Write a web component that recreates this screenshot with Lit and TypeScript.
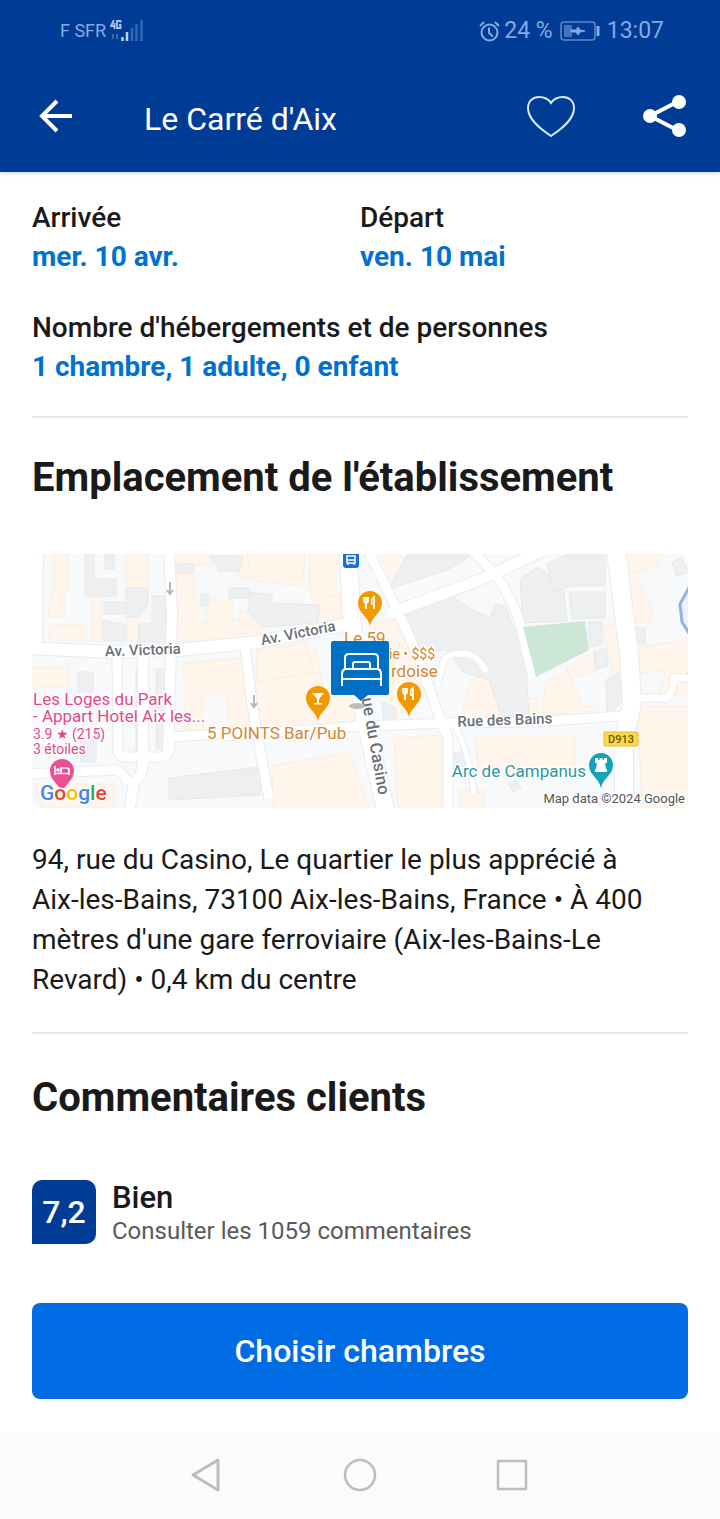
import { LitElement, html, svg, css } from "lit";
import { customElement } from "lit/decorators.js";

type Glyph = "fork" | "glass" | "bed" | "tower";

const POINTS: { x: number; y: number; color: string; glyph: Glyph }[] = [
  { x: 338, y: 49, color: "#f29900", glyph: "fork" },
  { x: 286, y: 144, color: "#f29900", glyph: "glass" },
  { x: 377, y: 140, color: "#f29900", glyph: "fork" },
  { x: 30, y: 217, color: "#ec4f93", glyph: "bed" },
  { x: 569, y: 211, color: "#12a4b6", glyph: "tower" },
];

const GLYPHS = {
  fork: svg`<path d="M-6-6v4a2 2 0 0 0 4 0v-4M-4-6V6M4 6V-6c-2 1-3 4-2 7h2" fill="none" stroke="#fff" stroke-width="1.800"/>`,
  glass: svg`<path d="M-6-5H6L1 1v4h3v1.500H-4V5h3V1z" fill="#fff"/>`,
  bed: svg`<path d="M-7-5v9M-7 2.500H7V4M7 2V-1q0-2-2-2H-1v5" fill="none" stroke="#fff" stroke-width="1.700"/><circle cx="-4" cy="-1" r="1.800" fill="#fff"/>`,
  tower: svg`<path d="M-6-7h3v2h1.500v-2h3v2H3v-2h3v5H4l1 6h1v3H-6V4h1l1-6h-2z" fill="#fff"/>`,
};

/* Building footprints, grouped by the zone tint they take. */
const BEIGE = [
  "M22 0h14v38H22zM20 38h12v25H16zM17 71h37v15H17z", "M60 43h9v44h-9zM94 0h22v35H94zM95 63h11v24H95z",
  "M145 19h17v30h4v20h8V46h26V66h28v18L143 88z", "M146 0h34v11h-34zM202 0h26v24h-22z",
  "M0 113h37v20H0z", "M152 109l58-5 8 72h-22v-34h-25v34h-19z", "M2 230h80v24H10z",
  "M215 0h58l-3 32-50-5zM278 0h26v48l-22 5-5-20zM208 57l24 4v18h-24z", "M284 46l24-6 1 24-27 5z",
  "M224 106l60-12 8 44 36 6 6 26-110 5z", "M224 98l50-10 8 30-56 10z",
  "M240 212l78-14 18 56h-95z", "M348 0l12 28 26-10-20-18zM342 70l28-8 27 74-36 30-8-60z",
  "M362 184l48-3v73h-44z", "M438 130l12-14 14 12 4 16h36l4 18-80 4z", "M443 182h100v36l-96 6z",
  "M514 127l22-10 14 35h18l-10 8h-48zM534 114l22-14 10 16-26 8zM570 70h16l12 46-18 4z", "M590 0h43l-8 12-34 10zM591 24h14l15 28-1 16h-21z",
  "M600 94l56-8v55l-30 0 8-24-26 2zM606 152h50v102h-46z", "M428 236h24v18h-24z",
];
const GREY = [
  "M53 0h9v25h22v17H53zM73 0h9v15h-9z", "M94 34h22v17l-10 12H94z", "M120 42h14v46h-27V70h13zM72 48h22v12h-22zM71 66l23 5v16H71z",
  "M144 10h18v9h-18zM178 2h33l-4 15h-20z", "M197 34h20v10h-20zM169 40h7v12h-7z", "M46 118h15v20H46zM49 186h15v22H49z",
  "M137 224l91-11 0 28-91 5z", "M218 38l22 3v8l48 2-2 18-56 4-14-15z", "M357 35l60-20 24-15-66 0zM371 59l47-18 20 13 20 10 5-14 10 2 20 50 4 60-28 0-12-36-26-8-16-22-34 2z",
  "M104 115h11v82h-11zM124 115h12v80h-12z", "M488 25l18-12 25 18 4 36-44 2z", "M515 10l20-10h38v32h-34l-18 6zM537 38h36v26l-33 1z",
  "M556 68h14v22l-12 3zM562 98l12-4 2 18-12 4zM574 126l16-8 3 26-18 20z", "M601 74h12v16h-12zM640 8l10-4 6 14-12 4z",
  "M412 200l24-3v15l-24 0zM208 218l20 0v22l-20 0zM350 148l14 6v14h-12z", "M476 230l8-4 5 8-8 4z",
];
const ROADS: { d: string; w: number }[] = [
  { d: "M4-4L3 94", w: 14 },
  { d: "M-4 94L80 98L146 96L226 88L316 70", w: 12 },
  { d: "M137-4L140 60L136 200", w: 10 },
  { d: "M85 100L86 196Q86 203 94 203H128Q138 203 138 190V183L190 180", w: 9 },
  { d: "M111 100V206Q111 222 102 228L97 258", w: 10 },
  { d: "M-4 220L84 216Q92 218 96 230", w: 9 },
  { d: "M190 182L330 172L420 169L500 168L592 162", w: 9 },
  { d: "M213 90L220 150L237 245", w: 9 },
  { d: "M316-4L322 100L334 170L354 258", w: 17 },
  { d: "M336-4L366 58L386 102L410 170L416 184V258", w: 9 },
  { d: "M356 60L448 26L512-4", w: 11 },
  { d: "M436-8L466 24Q484 52 489 74L501 124", w: 9 },
  { d: "M405 132L412 106Q416 98 436 100Q448 104 454 118", w: 6 },
  { d: "M420 168Q436 190 442 240", w: 5 },
  { d: "M584-4L597 100L600 150L592 185V258", w: 18 },
  { d: "M600 144H634Q640 142 642 124H656", w: 7 },
];

@customElement("place-map")
export class PlaceMap extends LitElement {
  static styles = css`
    :host { display: block; border-radius: 8px; overflow: hidden; }
    svg { display: block; width: 100%; height: auto; font-family: Roboto, "Liberation Sans", sans-serif; }
    .poi { font-size: 17px; }
    .small { font-size: 14px; }
    .street { font-size: 15px; font-weight: 500; fill: #6b7178; text-anchor: middle; }
    .casino { font-size: 17px; }
    .halo { stroke: #fff; stroke-width: 3px; paint-order: stroke; stroke-linejoin: round; }
    .food { fill: #d58632; }
    .hotel { fill: #df4a8b; }
    .sight { fill: #2e97a3; }
    .credit { font-size: 13px; fill: #555; text-anchor: end; }
    .shield { font-size: 11px; font-weight: 500; fill: #6b5510; text-anchor: middle; }
    .logo { font-size: 21px; font-weight: 500; }
  `;

  render() {
    return html`
      <svg viewBox="0 0 656 254" role="img" aria-label="Plan du quartier">
        <rect width="656" height="254" fill="#f7f9fb" />
        ${BEIGE.map((d) => svg`<path d=${d} fill="#fff5ea" stroke="#fbeee1" stroke-width="1"/>`)}
        ${GREY.map((d) => svg`<path d=${d} fill="#eeeff0" stroke="#e6e8ea" stroke-width="1"/>`)}
        <path d="M660 28L648 50L650 68L660 84" fill="#eaf2fb" stroke="#94b0e2" stroke-width="3" />
        <path d="M652 126l8-10" stroke="#63aebb" stroke-width="3" />
        ${ROADS.map((r) => svg`<path d=${r.d} fill="none" stroke="#e9ebee" stroke-width=${r.w + 2}/>`)}
        ${ROADS.map((r) => svg`<path d=${r.d} fill="none" stroke="#fff" stroke-width=${r.w}/>`)}
        <path d="M491 73L553 67L557 96L504 123Z" fill="#cde7d6" />
        <path d="M138 28v12m-3-4l3 4 3-4M222 141v12m-3-4l3 4 3-4" fill="none" stroke="#b4b8bc" stroke-width="2" />

        <text class="street halo" transform="translate(111 101) rotate(-2)">Av. Victoria</text>
        <text class="street halo" transform="translate(267 84) rotate(-11)">Av. Victoria</text>
        <text class="street halo" transform="translate(473 171) rotate(-2)">Rue des Bains</text>
        <text class="street casino halo" transform="translate(338 193) rotate(80)">ue du Casino</text>

        <text class="poi food halo" x="312" y="90">Le 59</text>
        <text class="small food halo" x="357" y="105">ie • $$$</text>
        <text class="poi food halo" x="359" y="123">rdoise</text>
        <text class="poi food halo" x="175" y="185">5 POINTS Bar/Pub</text>
        <text class="poi hotel halo" x="1" y="151">Les Loges du Park</text>
        <text class="poi hotel halo" x="1" y="168">- Appart Hotel Aix les...</text>
        <text class="small hotel halo" x="1" y="185">3.9 <tspan font-family="DejaVu Sans">★</tspan> (215)</text>
        <text class="small hotel halo" x="1" y="200">3 étoiles</text>
        <text class="poi sight halo" x="554" y="223" text-anchor="end">Arc de Campanus</text>

        <rect x="572" y="178" width="34" height="14" rx="1" fill="#f9d849" stroke="#e6c02f" />
        <text class="shield" x="589" y="189">D913</text>

        <rect x="311" y="-2" width="16" height="16" rx="3" fill="#1a6fd0" />
        <path d="M315 2h8v7h-8zM315 6h8M316 9v2M322 9v2" fill="none" stroke="#fff" stroke-width="1.500" />

        ${POINTS.map(
          (p) => svg`<g transform="translate(${p.x} ${p.y})">
            <path d="M0 23C-2 13-12 10-12 0a12 12 0 0 1 24 0C12 10 2 13 0 23z" fill=${p.color}/>
            ${GLYPHS[p.glyph]}
          </g>`
        )}

        <ellipse cx="325" cy="152" rx="8" ry="3" fill="#bcbcbc" />
        <path d="M301 87h54q2 0 2 2v50q0 2-2 2h-19l-7 6-7-6h-21q-2 0-2-2v-50q0-2 2-2z" fill="#0070c4" />
        <path d="M310 132v-12q0-4 3-5v-11q0-4 4-4h25q4 0 4 4v11q3 1 3 5v12M310 125h38M313 115h33M321 115v-5q0-2 2-2h13q2 0 2 2v5" fill="none" stroke="#fff" stroke-width="2" />

        <text class="logo halo" x="8" y="246"><tspan fill="#4285f4">G</tspan><tspan fill="#ea4335">o</tspan><tspan fill="#fbbc05">o</tspan><tspan fill="#4285f4">g</tspan><tspan fill="#34a853">l</tspan><tspan fill="#ea4335">e</tspan></text>
        <text class="credit halo" x="653" y="249">Map data ©2024 Google</text>
      </svg>
    `;
  }
}

@customElement("app-root")
export class AppRoot extends LitElement {
  static styles = css`
    :host {
      display: flex;
      flex-direction: column;
      min-height: 100vh;
      background: #fff;
      color: #1a1a1a;
      font: 400 28px/40px Roboto, "Liberation Sans", sans-serif;
    }
    * { box-sizing: border-box; }
    h1, h2, p, dl, dt, dd { margin: 0; font-size: inherit; font-weight: inherit; }
    button { padding: 0; border: 0; background: none; color: inherit; font: inherit; cursor: pointer; }
    svg { display: block; }

    header { background: #003b95; color: #fff; box-shadow: 0 1px 4px #0003; }
    .status {
      display: flex;
      justify-content: space-between;
      align-items: center;
      height: 62px;
      padding: 0 56px 0 60px;
      color: #86a9e4;
      font-size: 23px;
    }
    .status div { display: flex; align-items: center; }
    .carrier { gap: 4px; font-size: 18px; }
    .system { gap: 4px; }
    .battery { margin: 0 3px; }
    .bar { display: flex; align-items: center; height: 110px; padding: 0 32px; }
    .bar h1 { flex: 1; padding: 4px 0 0 64px; font-size: 32px; }
    .heart { margin-right: 63px; }

    main { flex: 1; padding: 26px 32px 33px; }
    .stay { display: grid; grid-template-columns: 1fr 1fr; row-gap: 32px; line-height: 39px; }
    .stay dt { font-weight: 500; }
    .stay dd { color: #0071d2; font-weight: 700; }
    .wide { grid-column: 1 / -1; }
    .link { font-weight: 700; }
    hr { height: 2px; margin: 30px 0 36px; border: 0; background: #e7e7e7; }
    h2 { font-size: 40px; font-weight: 700; line-height: 48px; }
    place-map { margin: 52px 0 32px; }
    .address { padding-right: 24px; }
    .address + hr { margin-top: 32px; margin-bottom: 40px; }
    .score { display: flex; gap: 16px; width: 100%; margin: 58px 0 57px; text-align: left; }
    .badge {
      display: grid;
      place-items: center;
      width: 64px;
      height: 64px;
      border-radius: 10px 10px 10px 0;
      background: #003b95;
      color: #fff;
      font-size: 32px;
      font-weight: 500;
    }
    .verdict { display: flex; flex-direction: column; }
    .verdict strong { font-size: 31px; font-weight: 500; line-height: 36px; }
    .verdict span { color: #595959; font-size: 24px; line-height: 30px; }
    .cta { display: block; width: 100%; height: 96px; border-radius: 8px; background: #006ce4; color: #fff; font-size: 32px; font-weight: 500; }

    nav { display: flex; justify-content: center; gap: 116px; padding: 25px 0 26px; background: #fbfbfb; }
  `;

  render() {
    return html`
      <header>
        <div class="status">
          <div class="carrier">
            <span>F SFR</span>
            <svg width="34" height="22" viewBox="0 0 34 22" fill="none" stroke="currentColor">
              <path d="M4 0L1 6h4.500M4.500 3v6M10.500 2.500V1H7v7h3.500V5H9" stroke="#a9c6f5" stroke-width="1.800" />
              <path d="M3 14v5M7 14v5" stroke-width="2" opacity=".4" />
              <path d="M12.500 17v4M17 12v9" stroke="#b8d4ff" stroke-width="2.500" />
              <path d="M22 8v13M26.500 4v17M31.500 0v21" stroke-width="2.500" opacity=".4" />
            </svg>
          </div>
          <div class="system">
            <svg width="21" height="21" viewBox="0 0 21 21" fill="none" stroke="currentColor" stroke-width="2">
              <circle cx="10.500" cy="11.500" r="8" /><path d="M10 6.500V12l4 3.500M1 5l4-4M20 5l-4-4" />
            </svg>
            <span>24 %</span>
            <svg class="battery" width="40" height="20" viewBox="0 0 40 20">
              <rect x="1" y="1" width="34" height="18" rx="3" fill="none" stroke="currentColor" stroke-width="1.500" opacity=".7" />
              <rect x="4" y="4" width="8" height="12" fill="currentColor" opacity=".5" />
              <path d="M11 9h5l2-3 2 3 5 1-5 1-2 3-2-3h-5z" fill="currentColor" stroke="currentColor" />
              <path d="M38 5v10" stroke="currentColor" stroke-width="3" />
            </svg>
            <span>13:07</span>
          </div>
        </div>
        <div class="bar">
          <button aria-label="Retour">
            <svg width="48" height="48" viewBox="0 0 48 48" fill="none" stroke="#fff" stroke-width="4">
              <path d="M25 8L10 23l15 15M11 23h29" />
            </svg>
          </button>
          <h1>Le Carré d'Aix</h1>
          <button class="heart" aria-label="Ajouter aux favoris">
            <svg width="52" height="48" viewBox="0 0 52 48" fill="none" stroke="#d5edff" stroke-width="2">
              <path d="M26 43C14 35 3 26 3 15C3 8 8 4 14 4C20 4 24 7 26 10C28 7 32 4 38 4C44 4 49 8 49 15C49 26 38 35 26 43Z" />
            </svg>
          </button>
          <button aria-label="Partager">
            <svg width="48" height="48" viewBox="0 0 48 48" fill="#fff">
              <path d="M39 8L10 23l29 15" fill="none" stroke="#fff" stroke-width="4" />
              <circle cx="39" cy="9" r="7" /><circle cx="10" cy="23" r="7" /><circle cx="39" cy="37" r="7" />
            </svg>
          </button>
        </div>
      </header>
      <main>
        <dl class="stay">
          <div><dt>Arrivée</dt><dd><button class="link">mer. 10 avr.</button></dd></div>
          <div><dt>Départ</dt><dd><button class="link">ven. 10 mai</button></dd></div>
          <div class="wide">
            <dt>Nombre d'hébergements et de personnes</dt>
            <dd><button class="link">1 chambre, 1 adulte, 0 enfant</button></dd>
          </div>
        </dl>
        <hr />
        <h2>Emplacement de l'établissement</h2>
        <place-map></place-map>
        <p class="address">94, rue du Casino, Le quartier le plus apprécié à Aix-les-Bains, 73100 Aix-les-Bains, France • À 400 mètres d'une gare ferroviaire (Aix-les-Bains-Le Revard) • 0,4 km du centre</p>
        <hr />
        <h2>Commentaires clients</h2>
        <button class="score">
          <span class="badge">7,2</span>
          <span class="verdict"><strong>Bien</strong><span>Consulter les 1059 commentaires</span></span>
        </button>
        <button class="cta">Choisir chambres</button>
      </main>
      <nav>
        <button aria-label="Précédent">
          <svg width="36" height="36" viewBox="0 0 36 36" fill="none" stroke="#bdbdbd" stroke-width="3" stroke-linejoin="round"><path d="M3 18L28 3v30z" /></svg>
        </button>
        <button aria-label="Accueil">
          <svg width="36" height="36" viewBox="0 0 36 36" fill="none" stroke="#bdbdbd" stroke-width="2.500"><circle cx="18" cy="18" r="15" /></svg>
        </button>
        <button aria-label="Applications récentes">
          <svg width="36" height="36" viewBox="0 0 36 36" fill="none" stroke="#bdbdbd" stroke-width="2.500" stroke-linejoin="round"><path d="M4 4h28v28H4z" /></svg>
        </button>
      </nav>
    `;
  }
}
